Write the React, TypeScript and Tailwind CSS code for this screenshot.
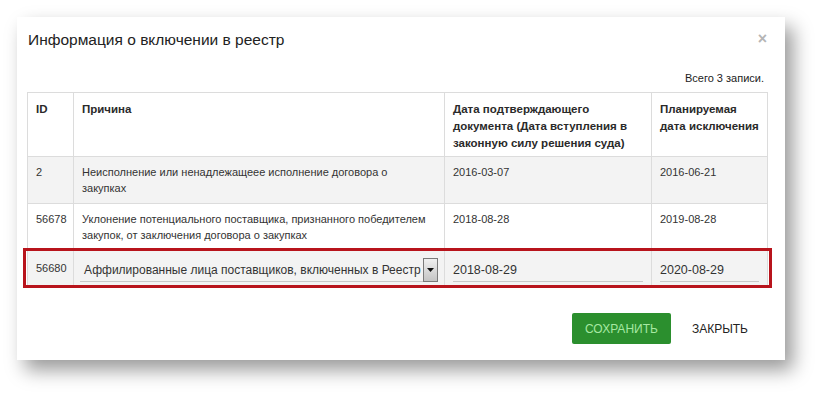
import { ReactNode } from "react";

interface Row {
  id: string;
  reason: string;
  docDate: string;
  endDate: string;
}

const rows: Row[] = [
  {
    id: "2",
    reason: "Неисполнение или ненадлежащеее исполнение договора о закупках",
    docDate: "2016-03-07",
    endDate: "2016-06-21",
  },
  {
    id: "56678",
    reason:
      "Уклонение потенциального поставщика, признанного победителем закупок, от заключения договора о закупках",
    docDate: "2018-08-28",
    endDate: "2019-08-28",
  },
];

const cols = "grid grid-cols-[46px_371px_207px_116px]";

function Cell({ children, className = "" }: { children?: ReactNode; className?: string }) {
  return (
    <div className={`border-r border-b border-[#dcdcdc] px-[8px] ${className}`}>{children}</div>
  );
}

export default function App() {
  return (
    <div
      className="min-h-screen bg-white pt-[17px] pl-[17px] text-[#333]"
      style={{ fontFamily: '"Liberation Sans", Arial, sans-serif' }}
    >
      <div className="w-[768px] h-[343px] bg-white shadow-[8px_10px_18px_rgba(0,0,0,0.4)] flex flex-col">
        {/* Header */}
        <div className="flex justify-between items-start pl-[11px] pr-[18px] pt-[12px]">
          <h1 className="text-[15.5px] leading-[22px] text-[#222]">Информация о включении в реестр</h1>
          <span className="text-[16px] leading-[16px] font-bold text-[#b5b5b5] mt-[2px]">×</span>
        </div>

        <div className="pl-[10px] w-[751px]">
          <p className="text-right text-[11px] leading-[14px] mt-[20px] pr-[4px] text-[#222]">
            Всего 3 записи.
          </p>

          {/* Table */}
          <div className="mt-[7px] border-l border-t border-[#dcdcdc] text-[11px]">
            <div className={`${cols} h-[64px] font-bold text-[11.5px] leading-[17px] text-[#2a2a2a]`}>
              <Cell className="pt-[8px]">ID</Cell>
              <Cell className="pt-[8px]">Причина</Cell>
              <Cell className="pt-[8px]">
                Дата подтверждающего документа (Дата вступления в законную силу решения суда)
              </Cell>
              <Cell className="pt-[8px]">Планируемая дата исключения</Cell>
            </div>

            {rows.map((r, i) => (
              <div
                key={r.id}
                className={`${cols} leading-[16px] ${i === 0 ? "h-[47px] bg-[#f3f3f3]" : "h-[46px] bg-white"}`}
              >
                <Cell className="pt-[7px]">{r.id}</Cell>
                <Cell className="pt-[7px] pr-[10px]">{r.reason}</Cell>
                <Cell className="pt-[7px]">{r.docDate}</Cell>
                <Cell className="pt-[7px]">{r.endDate}</Cell>
              </div>
            ))}

            {/* Editable row */}
            <div className={`${cols} relative h-[36px] bg-[#f3f3f3]`}>
              <Cell className="pt-[11px] leading-[14px]">56680</Cell>
              <Cell className="pt-[8px] pl-[6px] pr-[6px]">
                <div className="flex items-center h-[24px] border-b border-[#c8c8c8]">
                  <span className="flex-1 min-w-0 whitespace-nowrap text-[12px] pl-[4px] text-[#333]">
                    Аффилированные лица поставщиков, включенных в Реестр
                  </span>
                  <span className="w-[15px] h-[24px] shrink-0 border border-[#7a7a7a] bg-gradient-to-b from-[#f0f0f0] to-[#c4c4c4] flex items-center justify-center">
                    <svg width="7" height="4" viewBox="0 0 7 4">
                      <path d="M0 0h7L3.5 4z" fill="#111" />
                    </svg>
                  </span>
                </div>
              </Cell>
              <Cell className="pt-[8px]">
                <div className="h-[24px] border-b border-[#c8c8c8] text-[12.5px] leading-[24px] pr-[4px]">
                  2018-08-29
                </div>
              </Cell>
              <Cell className="pt-[8px]">
                <div className="h-[24px] border-b border-[#c8c8c8] text-[12.5px] leading-[24px]">
                  2020-08-29
                </div>
              </Cell>
              <div className="absolute left-[-5px] right-[-4px] top-[-2px] bottom-[-2px] border-[3px] border-[#b8141c] pointer-events-none" />
            </div>
          </div>
        </div>

        {/* Footer */}
        <div className="mt-auto flex justify-end items-center gap-[7px] pr-[23px] pb-[16px]">
          <button className="w-[99px] h-[31px] rounded-[2px] bg-[#2b8f2e] text-[#a6e8a2] text-[12px] uppercase">
            Сохранить
          </button>
          <button className="h-[31px] px-[14px] text-[12px] text-[#222] uppercase">Закрыть</button>
        </div>
      </div>
    </div>
  );
}
